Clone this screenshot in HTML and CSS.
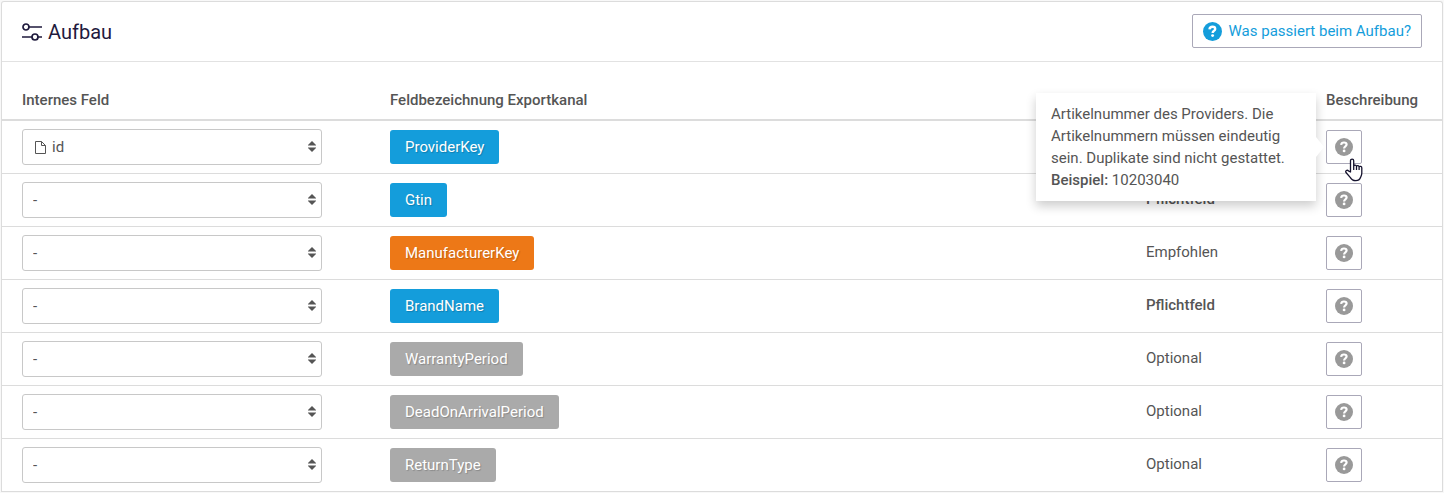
FILE: index.html
```html
<!DOCTYPE html>
<html lang="de">
<head>
<meta charset="utf-8">
<title>Aufbau</title>
<link rel="stylesheet" href="styles.css">
</head>
<body>
<svg class="sprite" aria-hidden="true">
  <symbol id="help" viewBox="0 0 18 18">
    <circle cx="9" cy="9" r="9"/>
    <path d="M6.100 6.900C6.300 5.100 7.300 4.500 9 4.500c1.600 0 2.600.8 2.600 2.100 0 1.800-2.500 1.700-2.500 3.800" fill="none" stroke="#fff" stroke-width="2.200"/>
    <circle cx="9.100" cy="12.900" r="1.400" fill="#fff"/>
  </symbol>
  <symbol id="arrows" viewBox="0 0 8 11">
    <path d="M4 0 8 4v.5H0V4ZM0 6.500h8V7l-4 4L0 7Z"/>
  </symbol>
</svg>
<main class="panel">
  <header class="panel-header">
    <h1 class="title">
      <svg class="title-icon" viewBox="0 0 20 18" aria-hidden="true"><g fill="none" stroke="currentColor" stroke-width="1.700"><circle cx="4" cy="4" r="3"/><path d="M7 4h13M0 14h10M16 14h4"/><circle cx="13" cy="14" r="3"/></g></svg>
      Aufbau
    </h1>
    <button class="help-link" type="button"><svg class="help-link-icon" aria-hidden="true"><use href="#help"/></svg>Was passiert beim Aufbau?</button>
  </header>
  <table class="fields">
    <colgroup><col class="col-field"><col><col class="col-status"><col class="col-help"></colgroup>
    <thead>
      <tr><th>Internes Feld</th><th>Feldbezeichnung Exportkanal</th><th></th><th>Beschreibung</th></tr>
    </thead>
    <tbody>
      <tr>
        <td><div class="picker"><select class="select with-icon" aria-label="Feld für ProviderKey"><option>id</option></select><svg class="file-icon" viewBox="0 0 11 13" aria-hidden="true"><path d="M.5.5h6l4 4v8H.5ZM6.500.5v4h4" fill="none" stroke="currentColor"/></svg><svg class="arrows" aria-hidden="true"><use href="#arrows"/></svg></div></td>
        <td><span class="tag required">ProviderKey</span></td>
        <td class="status"></td>
        <td>
          <div class="help-anchor">
            <button class="help" type="button" aria-label="Beschreibung ProviderKey" aria-describedby="tip"><svg class="help-icon" aria-hidden="true"><use href="#help"/></svg></button>
            <div class="tooltip" id="tip" role="tooltip">Artikelnummer des Providers. Die Artikelnummern müssen eindeutig sein. Duplikate sind nicht gestattet.<br><strong>Beispiel:</strong> 10203040</div>
            <svg class="cursor" viewBox="0 0 18 24" aria-hidden="true"><path d="M5.500 14V2.700c0-2.200 3.200-2.200 3.200 0V8c.4-1.400 2.500-1.200 2.800.2.600-1 2.300-.8 2.600.5.900-.8 2.700-.3 2.700 1.300v5c0 2-.7 3-1.200 4.300-.7 2-2.200 3.400-4.800 3.400-3 0-4.400-1.200-5.600-3.300L1 14.500c-1-1.800 1.200-3 2.400-1.600ZM8.700 8v4M11.500 8.200V12M14.100 8.700V12" fill="#fff" stroke="#15122e" stroke-width="1.300" stroke-linejoin="round"/></svg>
          </div>
        </td>
      </tr>
      <tr>
        <td><div class="picker"><select class="select" aria-label="Feld für Gtin"><option>-</option></select><svg class="arrows" aria-hidden="true"><use href="#arrows"/></svg></div></td>
        <td><span class="tag required">Gtin</span></td>
        <td class="status"><strong>Pflichtfeld</strong></td>
        <td><button class="help" type="button" aria-label="Beschreibung Gtin"><svg class="help-icon" aria-hidden="true"><use href="#help"/></svg></button></td>
      </tr>
      <tr>
        <td><div class="picker"><select class="select" aria-label="Feld für ManufacturerKey"><option>-</option></select><svg class="arrows" aria-hidden="true"><use href="#arrows"/></svg></div></td>
        <td><span class="tag recommended">ManufacturerKey</span></td>
        <td class="status">Empfohlen</td>
        <td><button class="help" type="button" aria-label="Beschreibung ManufacturerKey"><svg class="help-icon" aria-hidden="true"><use href="#help"/></svg></button></td>
      </tr>
      <tr>
        <td><div class="picker"><select class="select" aria-label="Feld für BrandName"><option>-</option></select><svg class="arrows" aria-hidden="true"><use href="#arrows"/></svg></div></td>
        <td><span class="tag required">BrandName</span></td>
        <td class="status"><strong>Pflichtfeld</strong></td>
        <td><button class="help" type="button" aria-label="Beschreibung BrandName"><svg class="help-icon" aria-hidden="true"><use href="#help"/></svg></button></td>
      </tr>
      <tr>
        <td><div class="picker"><select class="select" aria-label="Feld für WarrantyPeriod"><option>-</option></select><svg class="arrows" aria-hidden="true"><use href="#arrows"/></svg></div></td>
        <td><span class="tag">WarrantyPeriod</span></td>
        <td class="status">Optional</td>
        <td><button class="help" type="button" aria-label="Beschreibung WarrantyPeriod"><svg class="help-icon" aria-hidden="true"><use href="#help"/></svg></button></td>
      </tr>
      <tr>
        <td><div class="picker"><select class="select" aria-label="Feld für DeadOnArrivalPeriod"><option>-</option></select><svg class="arrows" aria-hidden="true"><use href="#arrows"/></svg></div></td>
        <td><span class="tag">DeadOnArrivalPeriod</span></td>
        <td class="status">Optional</td>
        <td><button class="help" type="button" aria-label="Beschreibung DeadOnArrivalPeriod"><svg class="help-icon" aria-hidden="true"><use href="#help"/></svg></button></td>
      </tr>
      <tr>
        <td><div class="picker"><select class="select" aria-label="Feld für ReturnType"><option>-</option></select><svg class="arrows" aria-hidden="true"><use href="#arrows"/></svg></div></td>
        <td><span class="tag">ReturnType</span></td>
        <td class="status">Optional</td>
        <td><button class="help" type="button" aria-label="Beschreibung ReturnType"><svg class="help-icon" aria-hidden="true"><use href="#help"/></svg></button></td>
      </tr>
    </tbody>
  </table>
</main>
</body>
</html>
```
FILE: styles.css
```css
* { box-sizing: border-box; }

body {
  margin: 0;
  padding: 1px 1px 0;
  background: #f8f8f8;
  color: #555;
  font: 15px/22px Roboto, "Liberation Sans", sans-serif;
}

strong { font-weight: 500; }
svg { display: block; }
.sprite { position: absolute; width: 0; height: 0; }

.panel {
  background: #fff;
  border: 1px solid #dcdcdc;
  border-bottom: 0;
  border-radius: 3px 3px 0 0;
}

.panel-header {
  display: flex;
  align-items: center;
  justify-content: space-between;
  padding: 12px 20px 13px;
  border-bottom: 1px solid #e2e2e2;
}

.title {
  display: flex;
  align-items: center;
  gap: 6px;
  margin: 0;
  color: #1f1a3d;
  font-size: 20px;
  font-weight: 400;
  line-height: 24px;
  padding-top: 2px;
}

.title-icon { width: 20px; height: 18px; }

.help-link {
  display: flex;
  align-items: center;
  gap: 7px;
  height: 34px;
  padding: 0 10px;
  background: #fff;
  border: 1px solid #aaa8b8;
  border-radius: 2px;
  color: #149ddb;
  font: inherit;
}

.help-link-icon { width: 19px; height: 19px; fill: currentColor; }

.fields {
  width: 100%;
  table-layout: fixed;
  border-collapse: separate;
  border-spacing: 0;
}

.col-field { width: 380px; }
.col-status { width: 180px; }
.col-help { width: 124px; }

th {
  padding: 27px 8px 8px;
  border-bottom: 2px solid #dcdcdc;
  font-weight: 500;
  text-align: left;
}

td {
  height: 53px;
  padding: 8px;
  border-bottom: 1px solid #dcdcdc;
  vertical-align: middle;
}

.status {
  padding-top: 14px;
  vertical-align: top;
}

th:first-child,
td:first-child { padding-left: 20px; }

.picker { position: relative; width: 300px; }

.select {
  display: block;
  width: 100%;
  height: 36px;
  padding: 0 24px 0 10px;
  appearance: none;
  background: #fff;
  border: 1px solid #c8c8c8;
  border-radius: 3px;
  color: #555;
  font: inherit;
}

.with-icon { padding-left: 29px; }

.file-icon {
  position: absolute;
  top: 12px;
  left: 13px;
  width: 11px;
  height: 13px;
}

.arrows {
  position: absolute;
  top: 12px;
  right: 6px;
  width: 8px;
  height: 11px;
  fill: #555;
}

.tag {
  display: block;
  width: fit-content;
  padding: 6px 15px;
  background: #aaa;
  border-radius: 3px;
  color: #fff;
  text-shadow: 1px 1px 1px rgba(0, 0, 0, 0.2);
}

.required { background: #149ddb; }
.recommended { background: #ed7817; }

.help {
  display: grid;
  place-items: center;
  width: 36px;
  height: 34px;
  padding: 0;
  background: #fff;
  border: 1px solid #aaa8b8;
  border-radius: 2px;
}

.help-icon { width: 18px; height: 18px; fill: #999; }

.help-anchor { position: relative; width: 36px; }

.tooltip {
  position: absolute;
  top: -37px;
  right: 46px;
  width: 280px;
  padding: 10px 15px;
  background: #fff;
  box-shadow: 0 5px 10px rgba(0, 0, 0, 0.2);
}

.tooltip::after {
  content: "";
  position: absolute;
  top: 44px;
  left: 100%;
  border: 10px solid transparent;
  border-left: 8px solid #fff;
  border-right: 0;
}

.cursor {
  position: absolute;
  top: 28px;
  left: 19px;
  width: 18px;
  height: 24px;
}
```
